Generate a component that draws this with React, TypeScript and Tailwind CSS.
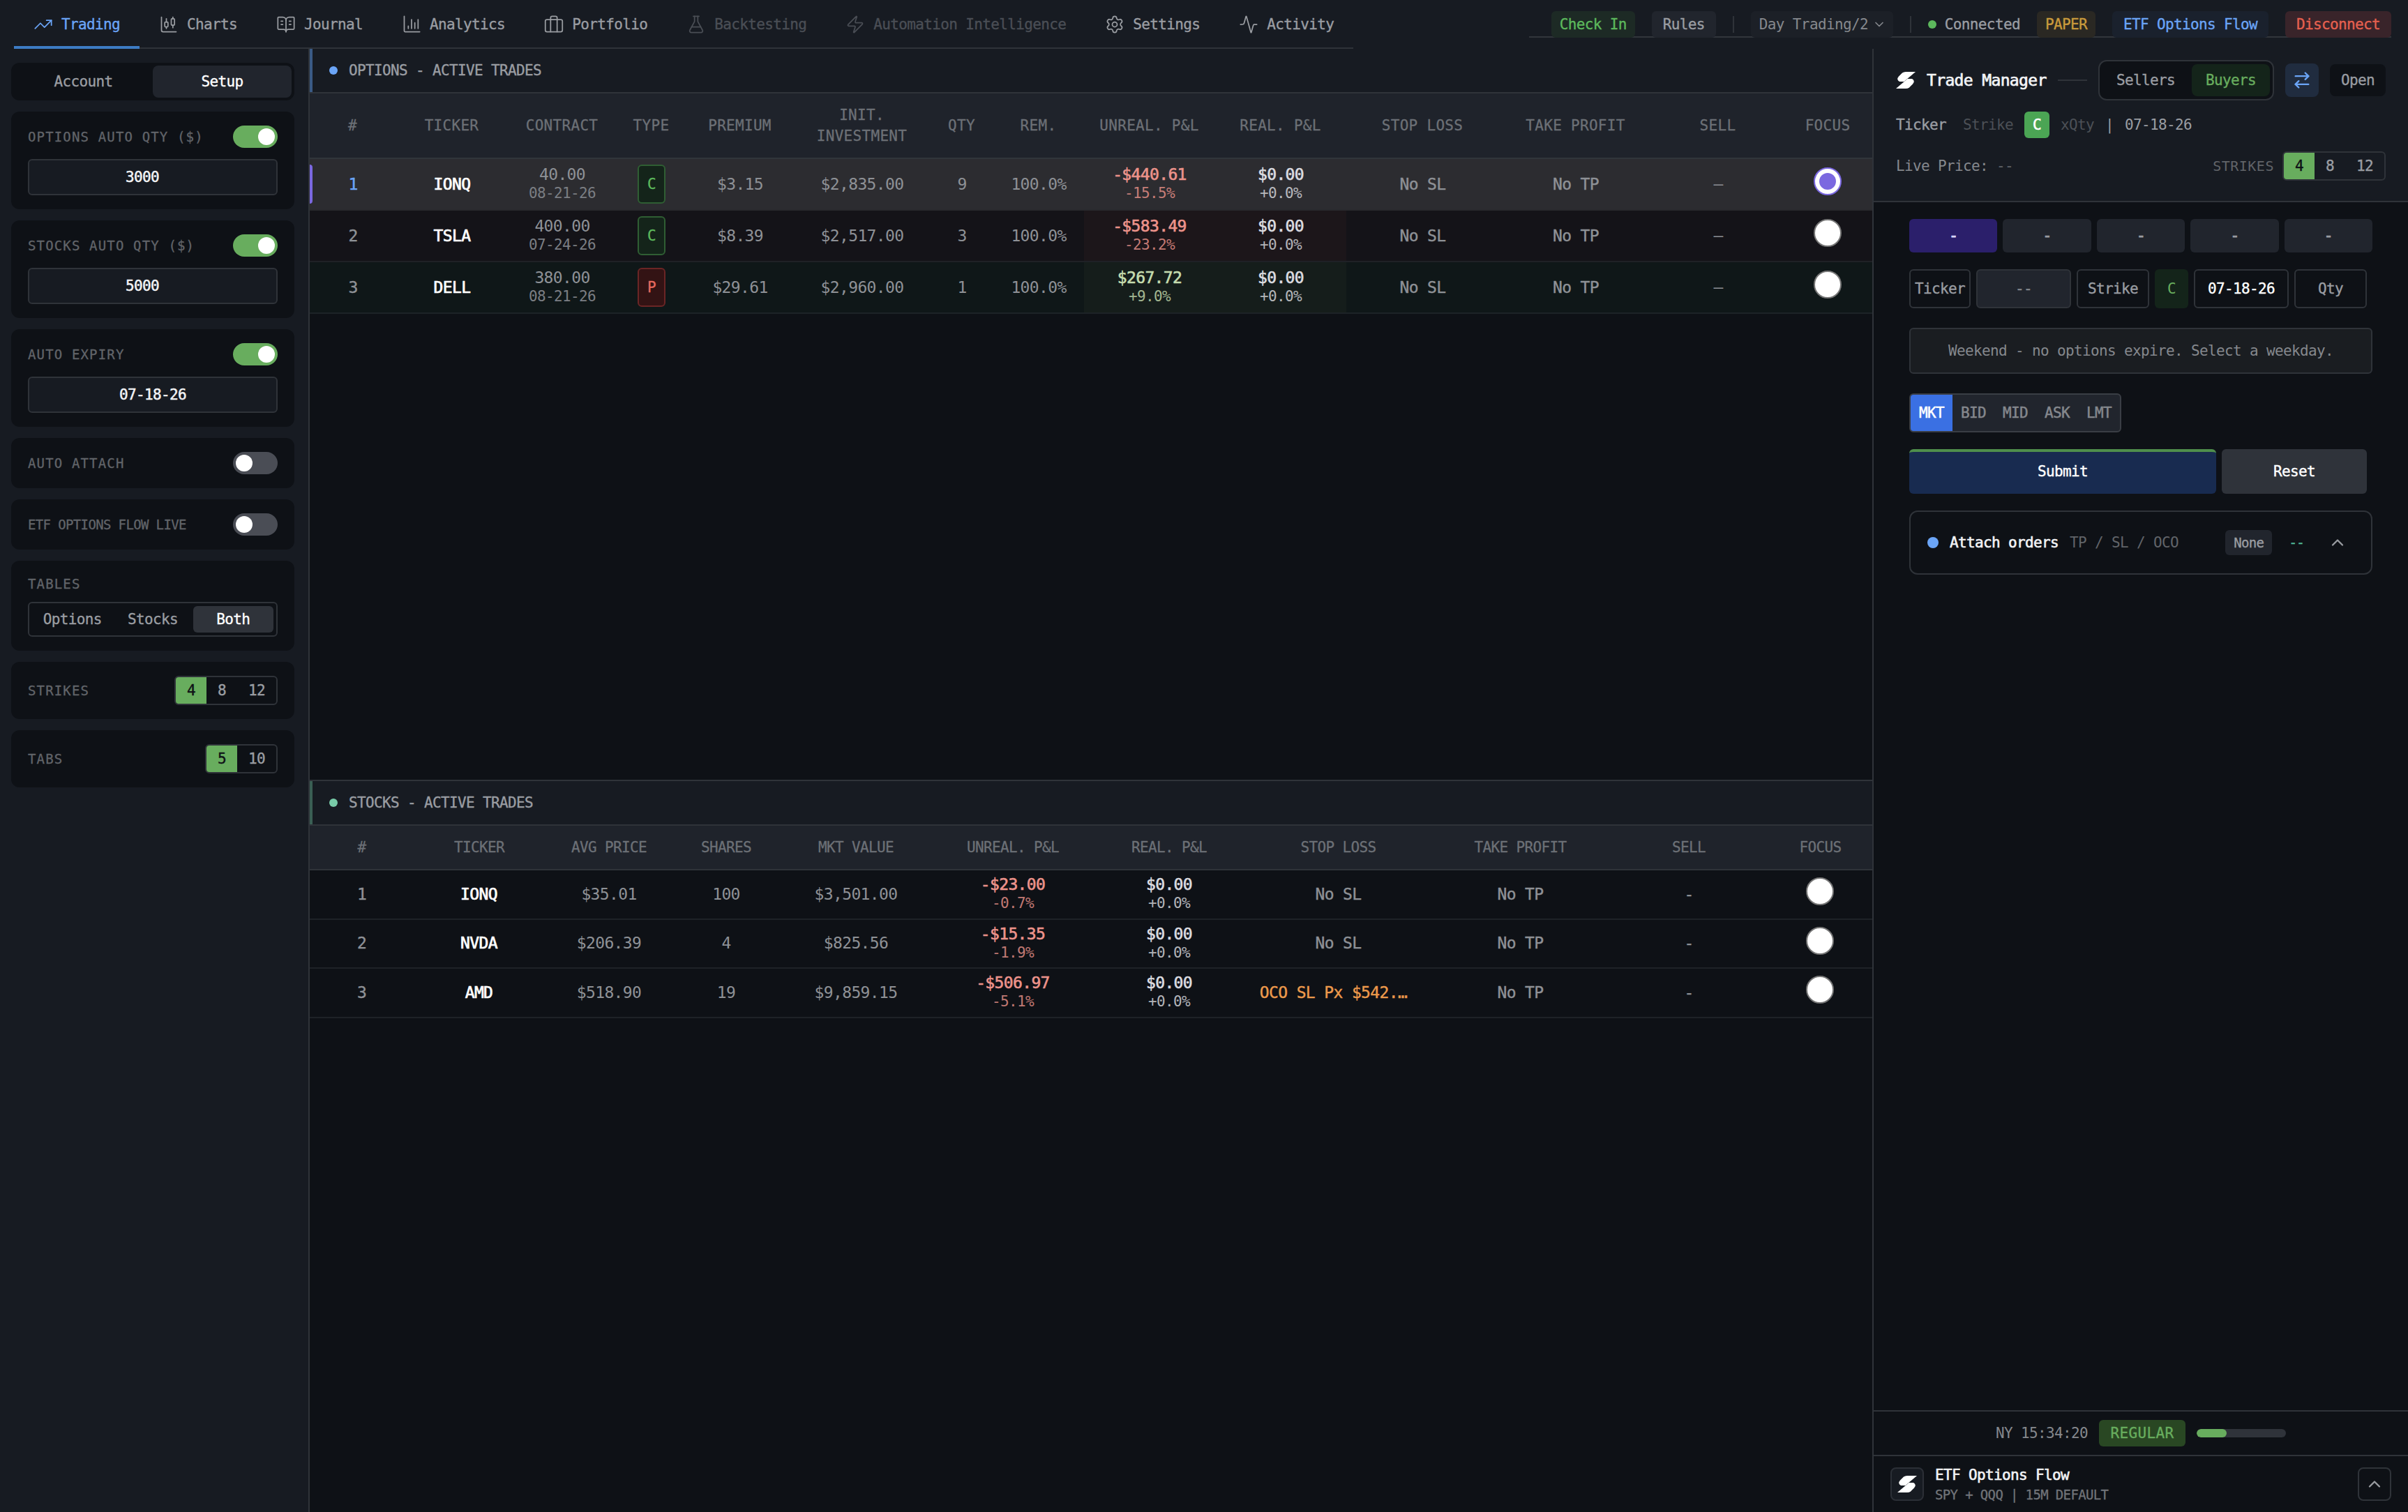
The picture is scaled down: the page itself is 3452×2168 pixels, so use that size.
import React from "react";
import {
  Activity,
  ArrowRightLeft,
  BookOpenText,
  ChartCandlestick,
  ChevronDown,
  ChevronUp,
  FlaskConical,
  Settings,
  TrendingUp,
  Zap,
} from "lucide-react";
import clsx from "clsx";

const BarsIcon = ({ size = 28 }: { size?: number }) => (
  <svg
    width={size}
    height={size}
    viewBox="0 0 24 24"
    fill="none"
    stroke="currentColor"
    strokeWidth={1.5}
    strokeLinecap="round"
    strokeLinejoin="round"
  >
    <path d="M3 2v18a1 1 0 0 0 1 1h18" />
    <path d="M8 17v-3M12 17V6M16 17v-7M20 17V6" />
  </svg>
);

const SuitcaseIcon = ({ size = 28 }: { size?: number }) => (
  <svg
    width={size}
    height={size}
    viewBox="0 0 24 24"
    fill="none"
    stroke="currentColor"
    strokeWidth={1.5}
    strokeLinecap="round"
    strokeLinejoin="round"
  >
    <rect x="1.5" y="6" width="21" height="15" rx="2" />
    <path d="M8 21V4a2 2 0 0 1 2-2h4a2 2 0 0 1 2 2v17" />
  </svg>
);

const Logo = () => (
  <svg width="28" height="24" viewBox="0 0 28 24" fill="#fff">
    <path d="M28 0H14Q11 0 9 1.500L4 6.500Q0 11 5 14h6.500z" />
    <path d="M0 24h14q3 0 5-1.500l5-5q4-4.500-1-7.500h-6.500z" />
  </svg>
);

const navItems = [
  { label: "Trading", icon: TrendingUp, state: "active" },
  { label: "Charts", icon: ChartCandlestick },
  { label: "Journal", icon: BookOpenText },
  { label: "Analytics", icon: BarsIcon },
  { label: "Portfolio", icon: SuitcaseIcon },
  { label: "Backtesting", icon: FlaskConical, state: "disabled" },
  { label: "Automation Intelligence", icon: Zap, state: "disabled" },
  { label: "Settings", icon: Settings },
  { label: "Activity", icon: Activity },
];

function TopBar() {
  return (
    <header className="flex h-[70px] shrink-0 items-start bg-[#171b22] pl-5 pr-6 [-webkit-text-stroke:0.35px]">
      <nav className="flex h-[70px] border-b-2 border-[#2f3339]">
        {navItems.map(({ label, icon: Icon, state }) => (
          <a
            key={label}
            className={clsx(
              "flex h-[70px] items-center gap-3 px-7",
              state === "active" && "border-b-4 border-[#3d7cc4] pt-1 text-[#6ba5f7]",
              state === "disabled" && "text-[#4a4e55]",
              !state && "text-[#9a9da2]"
            )}
          >
            <Icon size={28} strokeWidth={1.5} />
            {label}
          </a>
        ))}
      </nav>
      <div className="ml-auto flex h-[54px] items-end gap-6 border-b-2 border-[#32363c] pl-8 text-[#9a9da2]">
        <button className="-mb-0.5 h-[38px] rounded-md bg-[#1d2a25] px-3 text-[#5cb85c]">Check In</button>
        <button className="-mb-0.5 h-[38px] rounded-md bg-[#21252d] px-4">Rules</button>
        <div className="mb-[5px] h-6 w-0.5 bg-[#2f3339]" />
        <button className="-mb-0.5 flex h-[38px] w-[204px] items-center gap-1.5 whitespace-nowrap rounded-md bg-[#1c2027] px-3 text-[#85888d] [-webkit-text-stroke:0px]">
          Day Trading/2 <ChevronDown size={20} className="shrink-0" />
        </button>
        <div className="mb-[5px] h-6 w-0.5 bg-[#2f3339]" />
        <div className="-mb-0.5 flex h-[38px] items-center gap-3">
          <span className="size-3 rounded-full bg-[#5cb85c]" />
          Connected
        </div>
        <span className="-mb-0.5 flex h-[38px] items-center rounded-md bg-[#2a2823] px-3 text-[#c99a3c]">PAPER</span>
        <button className="-mb-0.5 h-[38px] rounded-md bg-[#1a212d] px-4 text-[#6ba5f7]">ETF Options Flow</button>
        <button className="-mb-0.5 h-[38px] rounded-md bg-[#39242a] px-4 text-[#e5604f]">Disconnect</button>
      </div>
    </header>
  );
}

function Toggle({ on }: { on?: boolean }) {
  return (
    <span className={clsx("flex h-8 w-16 rounded-full p-1", on ? "justify-end bg-[#68ad5e]" : "bg-[#4a4d55]")}>
      <span className="size-6 rounded-full bg-white" />
    </span>
  );
}

function Segments({ items }: { items: string[] }) {
  return (
    <div className="flex h-[42px] overflow-hidden rounded-md border-2 border-[#2f3339] [-webkit-text-stroke:0.4px]">
      {items.map((item, i) => (
        <button key={item} className={clsx("px-4", i === 0 ? "bg-[#68ad5e] text-[#0e1116]" : "text-[#9a9da2]")}>
          {item}
        </button>
      ))}
    </div>
  );
}

function Card({ label, children, tight }: { label: string; children?: React.ReactNode; tight?: boolean }) {
  return (
    <div className="flex items-center justify-between rounded-xl bg-[#0e1116] px-6 py-5">
      <span className={clsx("text-[19px] leading-8 text-[#616469] [-webkit-text-stroke:0.3px]", !tight && "tracking-[1.15px]")}>
        {label}
      </span>
      {children}
    </div>
  );
}

function InputCard({ label, value, numeric }: { label: string; value: string; numeric?: boolean }) {
  return (
    <div className="flex flex-col gap-4 rounded-xl bg-[#0e1116] px-6 py-5">
      <div className="flex h-8 items-center justify-between">
        <span className="text-[19px] tracking-[1.15px] text-[#616469] [-webkit-text-stroke:0.3px]">{label}</span>
        <Toggle on />
      </div>
      <div
        className={clsx(
          "flex h-[52px] items-center justify-center rounded-md border-2 border-[#2f3339] bg-[#171b22] text-[#f2f3f5] [-webkit-text-stroke:0.5px]",
          numeric && "pr-[30px]"
        )}
      >
        {value}
      </div>
    </div>
  );
}

function Sidebar() {
  return (
    <aside className="flex w-[444px] shrink-0 flex-col gap-4 border-r-2 border-[#2f3339] bg-[#171b22] pl-4 pr-5 pt-5">
      <div className="flex h-[54px] rounded-xl bg-[#0e1116] p-1 [-webkit-text-stroke:0.35px]">
        <button className="flex-1 text-[#9a9da2]">Account</button>
        <button className="flex-1 rounded-lg bg-[#21252d] text-white">Setup</button>
      </div>
      <InputCard label="OPTIONS AUTO QTY ($)" value="3000" numeric />
      <InputCard label="STOCKS AUTO QTY ($)" value="5000" numeric />
      <InputCard label="AUTO EXPIRY" value="07-18-26" />
      <Card label="AUTO ATTACH">
        <Toggle />
      </Card>
      <Card label="ETF OPTIONS FLOW LIVE" tight>
        <Toggle />
      </Card>
      <div className="rounded-xl bg-[#0e1116] px-6 py-5 [-webkit-text-stroke:0.35px]">
        <div className="mb-3 h-[27px] text-[19px] leading-[27px] tracking-[1.15px] text-[#616469]">TABLES</div>
        <div className="flex h-[50px] rounded-md border-2 border-[#2f3339] p-1 text-[#9a9da2]">
          <button className="flex-1">Options</button>
          <button className="flex-1">Stocks</button>
          <button className="flex-1 rounded-md bg-[#2f333a] text-white">Both</button>
        </div>
      </div>
      <Card label="STRIKES">
        <Segments items={["4", "8", "12"]} />
      </Card>
      <Card label="TABS">
        <Segments items={["5", "10"]} />
      </Card>
    </aside>
  );
}

const optionCols = "grid grid-cols-[124px_160px_156px_100px_154px_196px_90px_130px_188px_188px_219px_220px_188px_127px]";
const stockCols = "grid grid-cols-[149px_188px_184px_152px_220px_230px_218px_267px_255px_228px_149px]";

const optionHeads = ["#", "TICKER", "CONTRACT", "TYPE", "PREMIUM", "INIT. INVESTMENT", "QTY", "REM.", "UNREAL. P&L", "REAL. P&L", "STOP LOSS", "TAKE PROFIT", "SELL", "FOCUS"];
const stockHeads = ["#", "TICKER", "AVG PRICE", "SHARES", "MKT VALUE", "UNREAL. P&L", "REAL. P&L", "STOP LOSS", "TAKE PROFIT", "SELL", "FOCUS"];

const options = [
  { ticker: "IONQ", strike: "40.00", expiry: "08-21-26", type: "C", premium: "$3.15", invested: "$2,835.00", qty: 9, pnl: "-$440.61", pct: "-15.5%" },
  { ticker: "TSLA", strike: "400.00", expiry: "07-24-26", type: "C", premium: "$8.39", invested: "$2,517.00", qty: 3, pnl: "-$583.49", pct: "-23.2%" },
  { ticker: "DELL", strike: "380.00", expiry: "08-21-26", type: "P", premium: "$29.61", invested: "$2,960.00", qty: 1, pnl: "$267.72", pct: "+9.0%" },
];

const stocks = [
  { ticker: "IONQ", avg: "$35.01", shares: 100, value: "$3,501.00", pnl: "-$23.00", pct: "-0.7%", sl: "No SL" },
  { ticker: "NVDA", avg: "$206.39", shares: 4, value: "$825.56", pnl: "-$15.35", pct: "-1.9%", sl: "No SL" },
  { ticker: "AMD", avg: "$518.90", shares: 19, value: "$9,859.15", pnl: "-$506.97", pct: "-5.1%", sl: "OCO SL Px $542.…" },
];

function Cell({ className, children }: { className?: string; children?: React.ReactNode }) {
  return <div className={clsx("flex items-center justify-center", className)}>{children}</div>;
}

function Pnl({ value, pct, className }: { value: string; pct: string; className?: string }) {
  const tone = value === "$0.00" ? "text-[#dcdde0]" : value.startsWith("-") ? "text-[#ec938b]" : "text-[#c5dcae]";
  return (
    <div className={clsx("flex flex-col items-center justify-center", tone, className)}>
      <span className="leading-[27px] [-webkit-text-stroke:0.6px]">{value}</span>
      <span className="text-[21px] leading-[27px] opacity-80">{pct}</span>
    </div>
  );
}

function Radio({ checked }: { checked?: boolean }) {
  return (
    <Cell className="pb-2 pr-px">
      <span
        className={clsx(
          "flex size-10 items-center justify-center rounded-full border-2 bg-white",
          checked ? "border-[#7b68e0]" : "border-[#767676]"
        )}
      >
        {checked && <span className="size-6 rounded-full bg-[#7b68e0]" />}
      </span>
    </Cell>
  );
}

function PanelTitle({ title, dot, border }: { title: string; dot: string; border: string }) {
  return (
    <div className="flex h-16 border-b-2 border-[#2f3339] bg-[#171b22]">
      <div className={clsx("flex items-center gap-4 border-l-4 pl-6 text-[#9a9da2] [-webkit-text-stroke:0.35px]", border)}>
        <span className={clsx("size-3 rounded-full", dot)} />
        {title}
      </div>
    </div>
  );
}

function OptionsPanel() {
  return (
    <section className="h-[1048px]">
      <PanelTitle title="OPTIONS - ACTIVE TRADES" dot="bg-[#6ba5f7]" border="border-[#3a5a85]" />
      <div className={clsx(optionCols, "h-[94px] border-b-2 border-[#30353b] bg-[#1f232b] text-center leading-[30px] tracking-[0.3px] text-[#6c7076] [-webkit-text-stroke:0.3px]")}>
        {optionHeads.map((head) => (
          <Cell key={head} className="whitespace-nowrap pr-px">
            <span className={head.startsWith("INIT") ? "w-[130px] whitespace-normal" : ""}>{head}</span>
          </Cell>
        ))}
      </div>
      {options.map((row, i) => {
        const focused = i === 0;
        const gain = !row.pnl.startsWith("-");
        const pnlBg = focused ? "" : gain ? "bg-[#151d1b]" : "bg-[#1c161a]";
        return (
          <div
            key={row.ticker}
            className={clsx(
              optionCols,
              "relative h-[74px] border-b-2 text-[23px] text-[#8e9196]",
              focused ? "border-[#29292d] bg-[#2c2c30]" : gain ? "border-[#1d2327] bg-[#0f1718]" : "border-[#1f2126] bg-[#141318]"
            )}
          >
            {focused && <span className="absolute left-0 top-2 h-14 w-1 rounded-r bg-[#7b68e0]" />}
            <Cell className={clsx("[-webkit-text-stroke:0.4px]", focused && "text-[#6ba5f7]")}>{i + 1}</Cell>
            <Cell className="text-white [-webkit-text-stroke:0.7px]">{row.ticker}</Cell>
            <div className="flex flex-col items-center justify-center">
              <span className="leading-[27px]">{row.strike}</span>
              <span className="text-[21px] leading-[27px] text-[#7b7e83]">{row.expiry}</span>
            </div>
            <Cell>
              <span
                className={clsx(
                  "flex h-14 w-10 items-center justify-center rounded-md border-2 text-[21px] [-webkit-text-stroke:0.3px]",
                  row.type === "C" ? "border-[#2f5e33] bg-[#14241a] text-[#5cb85c]" : "border-[#6b2525] bg-[#331314] text-[#e5695f]"
                )}
              >
                {row.type}
              </span>
            </Cell>
            <Cell>{row.premium}</Cell>
            <Cell>{row.invested}</Cell>
            <Cell>{row.qty}</Cell>
            <Cell>100.0%</Cell>
            <Pnl value={row.pnl} pct={row.pct} className={pnlBg} />
            <Pnl value="$0.00" pct="+0.0%" className={pnlBg} />
            <Cell className="[-webkit-text-stroke:0.4px]">No SL</Cell>
            <Cell className="[-webkit-text-stroke:0.4px]">No TP</Cell>
            <Cell>–</Cell>
            <Radio checked={focused} />
          </div>
        );
      })}
    </section>
  );
}

function StocksPanel() {
  return (
    <section className="flex-1 border-t-2 border-[#2f3339]">
      <PanelTitle title="STOCKS - ACTIVE TRADES" dot="bg-[#78cba8]" border="border-[#3a5f54]" />
      <div className={clsx(stockCols, "h-16 border-b-2 border-[#2f3339] bg-[#1f232b] text-[#6c7076] [-webkit-text-stroke:0.3px]")}>
        {stockHeads.map((head) => (
          <Cell key={head}>{head}</Cell>
        ))}
      </div>
      {stocks.map((row, i) => (
        <div key={row.ticker} className={clsx(stockCols, "h-[70.5px] border-b-2 border-[#1e2227] text-[23px] text-[#8e9196]")}>
          <Cell className="[-webkit-text-stroke:0.4px]">{i + 1}</Cell>
          <Cell className="pr-px text-white [-webkit-text-stroke:0.7px]">{row.ticker}</Cell>
          <Cell>{row.avg}</Cell>
          <Cell>{row.shares}</Cell>
          <Cell>{row.value}</Cell>
          <Pnl value={row.pnl} pct={row.pct} />
          <Pnl value="$0.00" pct="+0.0%" />
          <Cell className={clsx("[-webkit-text-stroke:0.4px]", row.sl !== "No SL" && "pr-3.5 text-[#ec9a4c]")}>{row.sl}</Cell>
          <Cell className="[-webkit-text-stroke:0.4px]">No TP</Cell>
          <Cell className="[-webkit-text-stroke:0.4px]">-</Cell>
          <Radio />
        </div>
      ))}
    </section>
  );
}

function TradeHeader() {
  return (
    <div className="flex h-[220px] flex-col border-b-2 border-[#2f3339] bg-[#171b22] px-8 pt-4 text-[#9a9da2]">
      <div className="flex h-[58px] items-center gap-4 [-webkit-text-stroke:0.35px]">
        <Logo />
        <h2 className="text-[23px] text-[#f2f3f5] [-webkit-text-stroke:0.7px]">Trade Manager</h2>
        <div className="h-0.5 flex-1 bg-[#2f3339]" />
        <div className="flex h-[58px] gap-1 rounded-xl border-2 border-[#2f3339] bg-[#0e1116] p-1">
          <button className="px-5">Sellers</button>
          <button className="rounded-lg bg-[#14241a] px-5 text-[#68ad5e]">Buyers</button>
        </div>
        <button className="flex size-12 items-center justify-center rounded-lg bg-[#202c3f] text-[#6ba5f7]">
          <ArrowRightLeft size={28} />
        </button>
        <button className="h-[46px] rounded-lg bg-[#0e1116] px-4">Open</button>
      </div>
      <div className="mt-4 flex h-[38px] items-center gap-4">
        <span className="mr-2 [-webkit-text-stroke:0.4px]">Ticker</span>
        <span className="text-[#4c5056]">Strike</span>
        <span className="flex h-[38px] w-9 items-center justify-center rounded-md bg-[#4ba554] text-white [-webkit-text-stroke:0.6px]">C</span>
        <span className="text-[#4c5056]">xQty</span>
        <span>|</span>
        <span>07-18-26</span>
      </div>
      <div className="mt-[19px] flex items-center">
        <span className="text-[#85888d]">Live Price: <span className="text-[#616469]">--</span></span>
        <span className="ml-auto mr-3 text-[20px] tracking-[0.5px] text-[#616469]">STRIKES</span>
        <Segments items={["4", "8", "12"]} />
      </div>
    </div>
  );
}

const field = "flex h-14 items-center justify-center rounded-md border-2 border-[#2f3339] [-webkit-text-stroke:0.35px]";

function TradeForm() {
  return (
    <div className="flex flex-1 flex-col px-[51px] pt-6 text-[#9a9da2]">
      <div className="flex gap-2 [-webkit-text-stroke:1px]">
        {[0, 1, 2, 3, 4].map((n) => (
          <button key={n} className={clsx("h-12 flex-1 rounded-md", n === 0 ? "bg-[#2b1f6b] text-[#dcd8ff]" : "bg-[#21252d]")}>
            -
          </button>
        ))}
      </div>
      <div className="mt-6 flex gap-2">
        <div className={clsx(field, "w-[88px]")}>Ticker</div>
        <div className={clsx(field, "w-[136px] bg-[#21252d] text-[#85888d]")}>--</div>
        <div className={clsx(field, "w-[104px]")}>Strike</div>
        <div className="flex h-14 w-12 items-center justify-center rounded-md bg-[#14241a] text-[#68ad5e]">C</div>
        <div className={clsx(field, "w-[136px] text-white")}>07-18-26</div>
        <div className={clsx(field, "w-[104px]")}>Qty</div>
      </div>
      <div className="mt-7 flex h-[66px] items-center justify-center rounded-md border-2 border-[#2f3339] bg-[#1a1d21] text-[#85888d]">
        Weekend - no options expire. Select a weekday.
      </div>
      <div className="mt-7 flex h-14 w-[304px] overflow-hidden rounded-md border-2 border-[#3a3e45] bg-[#21252d]">
        {["MKT", "BID", "MID", "ASK", "LMT"].map((kind, i) => (
          <button key={kind} className={clsx("flex-1 [-webkit-text-stroke:0.5px]", i === 0 ? "bg-[#3a70e3] text-white" : "text-[#85888d]")}>
            {kind}
          </button>
        ))}
      </div>
      <div className="mt-6 flex gap-2 text-white [-webkit-text-stroke:0.4px]">
        <button className="h-16 w-[440px] rounded-md border-t-4 border-[#4f8f4c] bg-[#182b50] pb-1">Submit</button>
        <button className="h-16 w-[208px] rounded-md bg-[#2f333a]">Reset</button>
      </div>
      <div className="mt-6 flex h-[92px] items-center rounded-xl border-2 border-[#2f3339] px-6">
        <span className="mr-4 size-4 rounded-full bg-[#6ba5f7]" />
        <span className="mr-4 text-[#f2f3f5] [-webkit-text-stroke:0.6px]">Attach orders</span>
        <span className="text-[#616469]">TP / SL / OCO</span>
        <span className="ml-auto flex h-9 items-center rounded-md bg-[#21252d] px-3 text-[19px] [-webkit-text-stroke:0.35px]">None</span>
        <span className="ml-6 text-[19px] text-[#4fb595] [-webkit-text-stroke:0.5px]">--</span>
        <ChevronUp size={28} className="ml-[34px] mr-2.5" />
      </div>
    </div>
  );
}

function TradePanel() {
  return (
    <aside className="flex w-[768px] shrink-0 flex-col border-l-2 border-[#2f3339] bg-[#0e1116]">
      <TradeHeader />
      <TradeForm />
      <div className="flex h-16 items-center justify-center gap-4 border-t-2 border-[#2f3339] text-[#85888d]">
        NY 15:34:20
        <span className="flex h-[38px] w-[124px] items-center justify-center rounded-md bg-[#294723] tracking-[0.35px] text-[#68ad5e] [-webkit-text-stroke:0.35px]">
          REGULAR
        </span>
        <div className="h-3 w-32 overflow-hidden rounded-full bg-[#2f333a]">
          <div className="h-full w-1/3 rounded-full bg-[#68ad5e]" />
        </div>
      </div>
      <div className="flex h-[82px] items-center gap-4 border-t-2 border-[#2f3339] px-6">
        <span className="flex size-12 items-center justify-center rounded-lg border-2 border-[#2b2f36] bg-[#171b22]">
          <Logo />
        </span>
        <div className="pt-0.5">
          <div className="leading-7 text-[#f2f3f5] [-webkit-text-stroke:0.6px]">ETF Options Flow</div>
          <div className="text-[19px] leading-7 text-[#717479] [-webkit-text-stroke:0.3px]">SPY + QQQ | 15M DEFAULT</div>
        </div>
        <button className="ml-auto flex size-12 items-center justify-center rounded-lg border-2 border-[#2f3339] text-[#9a9da2]">
          <ChevronUp size={28} />
        </button>
      </div>
    </aside>
  );
}

export default function App() {
  return (
    <div className="flex h-[2168px] w-[3452px] flex-col overflow-hidden bg-[#0e1116] font-['DejaVu_Sans_Mono',monospace] text-[21px] leading-[33px] tracking-[-0.64px]">
      <TopBar />
      <div className="flex min-h-0 flex-1">
        <Sidebar />
        <main className="flex w-[2240px] shrink-0 flex-col">
          <OptionsPanel />
          <StocksPanel />
        </main>
        <TradePanel />
      </div>
    </div>
  );
}
